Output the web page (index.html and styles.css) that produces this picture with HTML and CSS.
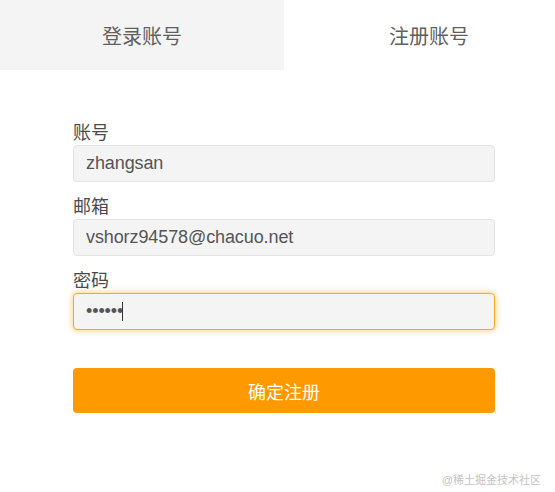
FILE: index.html
```html
<!DOCTYPE html>
<html lang="zh-CN">
<head>
<meta charset="utf-8">
<title>注册账号</title>
<link rel="stylesheet" href="styles.css">
</head>
<body>
<div class="page">
  <div class="tabs">
    <div class="tab tab-login">登录账号</div>
    <div class="tab tab-register">注册账号</div>
  </div>
  <form class="form">
    <label class="label">账号</label>
    <input class="field" type="text" value="zhangsan">
    <label class="label">邮箱</label>
    <input class="field" type="text" value="vshorz94578@chacuo.net">
    <label class="label">密码</label>
    <div class="field-wrap">
      <input class="field field-focus" type="password" value="123456">
      <span class="caret"></span>
    </div>
    <button class="submit" type="button">确定注册</button>
  </form>
  <div class="watermark">@稀土掘金技术社区</div>
</div>
</body>
</html>
```
FILE: styles.css
```css
html, body {
  margin: 0;
  padding: 0;
  background: #ffffff;
}
body {
  font-family: "Liberation Sans", "Noto Sans CJK SC", sans-serif;
  width: 555px;
  height: 492px;
  overflow: hidden;
}
.page {
  position: relative;
  height: 492px;
}
.tabs {
  display: flex;
  height: 70px;
}
.tab {
  display: flex;
  align-items: center;
  justify-content: center;
  font-size: 20px;
  color: #5f5f5f;
}
.tab-login {
  width: 284px;
  background: #f4f4f4;
}
.tab-register {
  flex: 1;
  padding-left: 19px;
}
.form {
  display: flex;
  flex-direction: column;
  padding: 51px 60px 0 73px;
}
.label {
  display: block;
  font-size: 18px;
  line-height: 24px;
  color: #4a4a4a;
}
.field {
  box-sizing: border-box;
  width: 422px;
  height: 37px;
  margin: 0 0 13px 0;
  padding: 0 12px;
  border: 1px solid #e3e3e3;
  border-radius: 4px;
  background: #f4f4f4;
  font-family: "Liberation Sans", "Noto Sans CJK SC", sans-serif;
  font-size: 18px;
  letter-spacing: -0.1px;
  color: #555555;
  outline: none;
}
.field-wrap {
  position: relative;
  width: 422px;
}
.field-focus {
  margin-bottom: 38px;
  border-color: #f7a928;
  box-shadow: 0 0 6px rgba(255, 165, 20, 0.65);
  caret-color: transparent;
}
.caret {
  position: absolute;
  left: 49px;
  top: 9px;
  width: 1px;
  height: 19px;
  background: #333333;
}
.submit {
  width: 422px;
  height: 45px;
  border: none;
  border-radius: 4px;
  background: #ff9900;
  color: #ffffff;
  font-family: "Liberation Sans", "Noto Sans CJK SC", sans-serif;
  font-size: 18px;
  cursor: pointer;
}
.watermark {
  position: absolute;
  right: 14px;
  bottom: 5px;
  font-size: 11px;
  color: #c4c4c4;
}
```
